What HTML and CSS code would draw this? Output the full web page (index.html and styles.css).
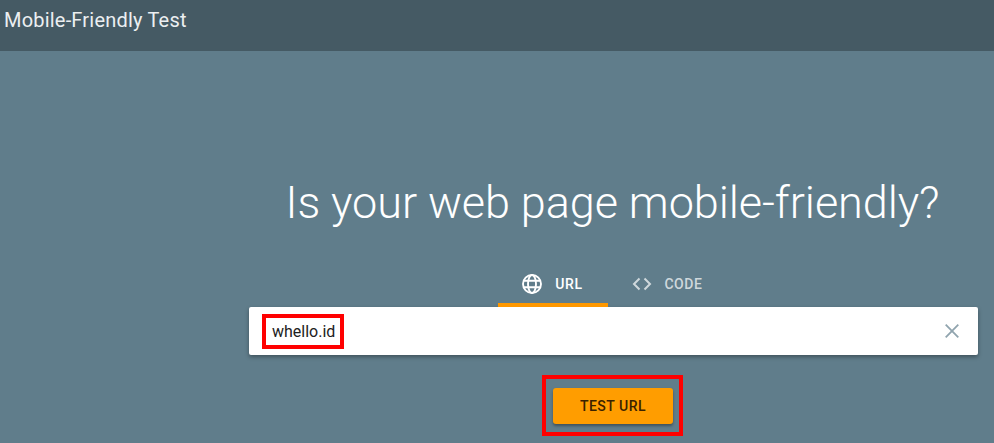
FILE: index.html
```html
<!DOCTYPE html>
<html lang="en">
<head>
  <meta charset="UTF-8" />
  <title>Mobile-Friendly Test</title>
  <link rel="stylesheet" href="styles.css">
</head>
<body>
  <header class="topbar">Mobile-Friendly Test</header>

  <main class="container">
    <h1>Is your web page mobile-friendly?</h1>

    <div class="tabs">
      <div class="tab active">
        <svg class="tab-icon" viewBox="0 0 24 24" width="24" height="24" fill="none" stroke="#fff" stroke-width="1.9">
          <circle cx="12" cy="12" r="9"/>
          <ellipse cx="12" cy="12" rx="4" ry="9"/>
          <path d="M3.6 8.7h16.8M3.6 15.3h16.8"/>
        </svg>
        <span>URL</span>
      </div>
      <div class="tab code">
        <svg class="tab-icon" viewBox="0 0 24 24" width="24" height="24" fill="none" stroke="#cfd8dc" stroke-width="2">
          <path d="M9.5 6.5L4 12l5.5 5.5M14.5 6.5L20 12l-5.5 5.5"/>
        </svg>
        <span>CODE</span>
      </div>
    </div>

    <div class="url-box">
      <span class="mark url-text">whello.id</span>
      <svg class="clear" viewBox="0 0 14 14" width="14" height="14" stroke="#90a4ae" stroke-width="1.8">
        <path d="M.7.7l12.6 12.6M13.3.7L.7 13.3"/>
      </svg>
    </div>

    <div class="acoes">
      <div class="mark btn-mark">
        <button>TEST URL</button>
      </div>
    </div>
  </main>
</body>
</html>
```

FILE: styles.css
```css
body {
  margin: 0;
  height: 443px;
  overflow: hidden;
  font-family: Roboto, sans-serif;
  background-color: #607d8b;
  color: #fff;
}

.topbar {
  height: 51px;
  padding: 2px 0 0 4px;
  box-sizing: border-box;
  background-color: #455a64;
  color: #eceff1;
  font-size: 20px;
  line-height: 36px;
  letter-spacing: 0.2px;
}

.container {
  width: 729px;
  margin-left: 249px;
}

h1 {
  margin: 0;
  padding: 121px 2px 0 0;
  font-size: 45px;
  line-height: 62px;
  font-weight: 300;
  letter-spacing: -0.06px;
  text-align: center;
}

.tabs {
  display: flex;
  margin: 31px 0 0 249px;
}

.tab {
  display: flex;
  align-items: center;
  justify-content: center;
  gap: 10px;
  width: 110px;
  height: 42px;
  box-sizing: border-box;
  border-bottom: 4px solid transparent;
  font-size: 14px;
  font-weight: 500;
  letter-spacing: 0.6px;
  color: #cfd8dc;
}

.tab.active {
  gap: 11px;
  padding-right: 3px;
  border-bottom-color: #ff9800;
  color: #fff;
}

.tab.code {
  padding-left: 7px;
}

.url-box {
  display: flex;
  align-items: center;
  justify-content: space-between;
  height: 48px;
  padding: 0 19px 0 13px;
  box-sizing: border-box;
  background-color: #fff;
  border-radius: 2px;
  box-shadow: 0 2px 4px rgba(0, 0, 0, 0.35);
}

.mark {
  border: 4px solid #f00;
  box-sizing: border-box;
}

.url-text {
  width: 82px;
  height: 35px;
  padding-left: 6px;
  font-size: 16px;
  line-height: 27px;
  color: #212121;
}

.acoes {
  display: flex;
  justify-content: center;
  margin: 20px 0 0 -2px;
}

.btn-mark {
  display: flex;
  align-items: center;
  justify-content: flex-end;
  padding-right: 6px;
  width: 141px;
  height: 61px;
}

button {
  width: 120px;
  height: 36px;
  padding: 0;
  border: 0;
  border-radius: 3px;
  background-color: #ff9d00;
  color: #3a2200;
  font-family: Roboto, sans-serif;
  font-size: 14px;
  font-weight: 500;
  letter-spacing: 0.5px;
  box-shadow: 0 2px 3px rgba(0, 0, 0, 0.35);
}
```
